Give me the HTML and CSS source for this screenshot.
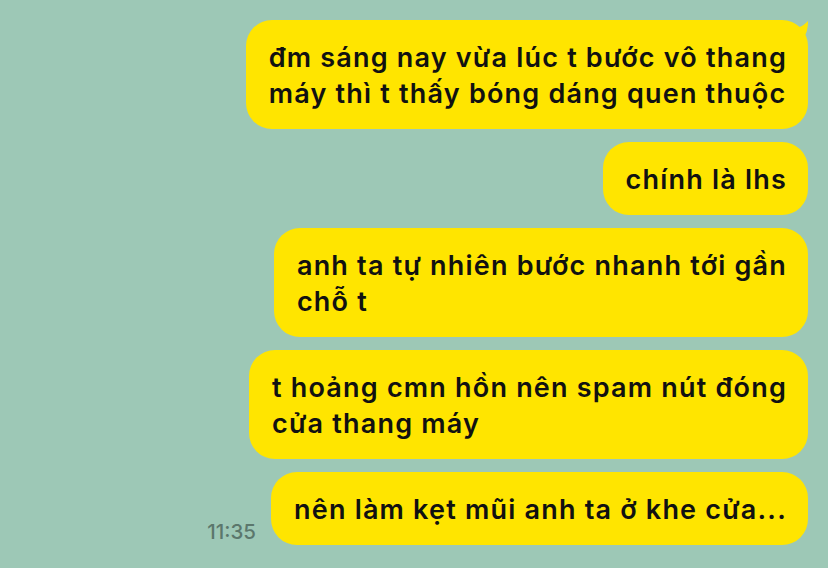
FILE: index.html
```html
<!DOCTYPE html>
<html lang="vi">
<head>
  <meta charset="UTF-8" />
  <meta name="viewport" content="width=device-width, initial-scale=1.0" />
  <title>Chat</title>
  <link rel="stylesheet" href="styles.css">
</head>
<body>
  <div class="chat">
    <div class="msg">
      <div class="bubble first">
        đm sáng nay vừa lúc t bước vô thang<br>máy thì t thấy bóng dáng quen thuộc
        <svg class="tail" width="20" height="22" viewBox="0 0 20 22">
          <path d="M0 8 C6 8 10 6 15 1 C15 8 14 14 8 22 L0 22 Z" fill="#ffe500"/>
        </svg>
      </div>
    </div>
    <div class="msg">
      <div class="bubble">chính là lhs</div>
    </div>
    <div class="msg">
      <div class="bubble">anh ta tự nhiên bước nhanh tới gần<br>chỗ t</div>
    </div>
    <div class="msg">
      <div class="bubble">t hoảng cmn hồn nên spam nút đóng<br>cửa thang máy</div>
    </div>
    <div class="msg">
      <span class="time">11:35</span>
      <div class="bubble">nên làm kẹt mũi anh ta ở khe cửa...</div>
    </div>
  </div>
</body>
</html>
```

FILE: styles.css
```css
:root {
  --bg: #9dc8b6;
  --bubble: #ffe500;
  --fg: #111;
}

body {
  margin: 0;
  background: var(--bg);
  font-family: 'Inter', 'Noto Sans', sans-serif;
  color: var(--fg);
}

.chat {
  display: flex;
  flex-direction: column;
  align-items: flex-end;
  gap: 13px;
  padding: 20px 20px 0 20px;
}

.msg {
  display: flex;
  align-items: flex-end;
  gap: 15px;
}

.bubble {
  position: relative;
  background: var(--bubble);
  border-radius: 26px;
  padding: 20px 21px 17px 23px;
  font-size: 27px;
  font-weight: 600;
  letter-spacing: 1.2px;
  line-height: 36px;
  white-space: nowrap;
}

.tail {
  position: absolute;
  top: 0;
  right: -5px;
}

.time {
  font-size: 20.5px;
  font-weight: 500;
  color: #5b776c;
  line-height: 20px;
  margin-bottom: 3px;
}
```
